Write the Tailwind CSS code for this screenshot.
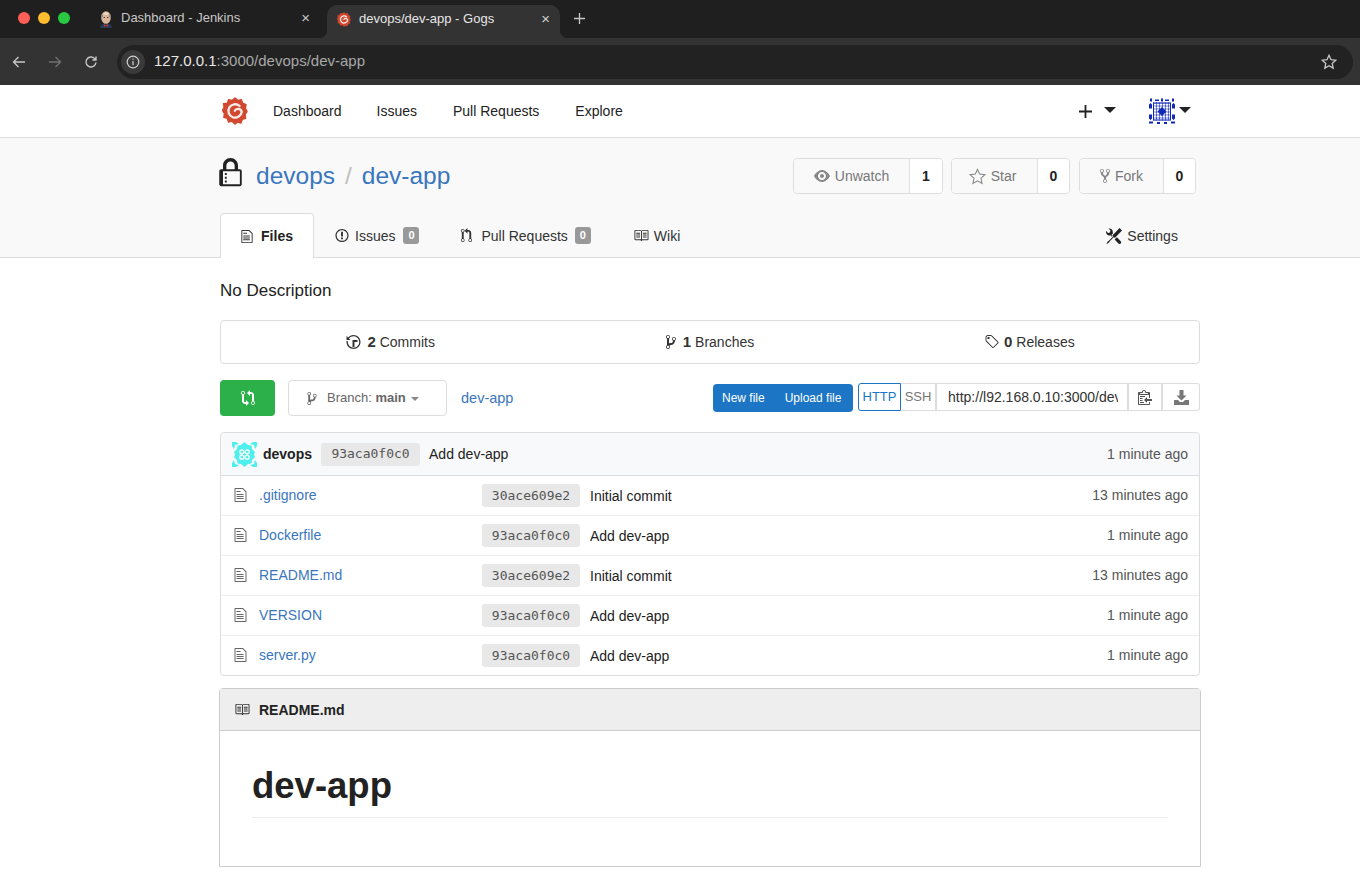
<!DOCTYPE html>
<html lang="en">
<head>
    <meta charset="UTF-8">
    <title>devops/dev-app - Gogs</title>
    <script src="https://cdn.jsdelivr.net/npm/@tailwindcss/browser@4"></script>
</head>
<body class="w-[1360px] h-[878px] overflow-hidden bg-white text-[#212121] font-['Liberation_Sans',Arial,sans-serif]">
    <svg class="absolute w-0 h-0">
        <defs>
            <pattern id="p-lattice" width="3" height="3" patternUnits="userSpaceOnUse"><path d="M1.500 .2l1.300 1.300-1.300 1.300-1.300-1.300z" fill="#1228b8"/></pattern>
        </defs>
        <symbol id="i-file" viewBox="0 0 12 16"><path d="M6 5H2V4h4v1zM2 8h7V7H2v1zm0 2h7V9H2v1zm0 2h7v-1H2v1zm10-7.5V14c0 .55-.45 1-1 1H1c-.55 0-1-.45-1-1V2c0-.55.45-1 1-1h7.5L12 4.5zM11 5L8 2H1v12h10V5z"/></symbol>
        <symbol id="i-book" viewBox="0 0 16 16"><path d="M3 5h4v1H3V5zm0 3h4V7H3v1zm0 2h4V9H3v1zm11-5h-4v1h4V5zm0 2h-4v1h4V7zm0 2h-4v1h4V9zm2-6v9c0 .55-.45 1-1 1H9.5l-1 1-1-1H2c-.55 0-1-.45-1-1V3c0-.55.45-1 1-1h5.5l1 1 1-1H15c.55 0 1 .45 1 1zm-8 .5L7.5 3H2v9h6V3.5zm7-.5H9.5l-.5.5V12h6V3z"/></symbol>
        <symbol id="i-branch" viewBox="0 0 10 16"><path d="M10 5c0-1.11-.89-2-2-2a1.993 1.993 0 00-1 3.72v.3c-.02.52-.23.98-.63 1.38-.4.4-.86.61-1.38.63-.83.02-1.48.16-2 .45V4.72a1.993 1.993 0 00-1-3.72C.88 1 0 1.89 0 3a2 2 0 001 1.72v6.56c-.59.35-1 .99-1 1.72 0 1.11.89 2 2 2 1.11 0 2-.89 2-2 0-.53-.2-1-.53-1.36.09-.06.48-.41.59-.47.25-.11.56-.17.94-.17 1.05-.05 1.95-.45 2.75-1.25S8.95 7.77 9 6.73h-.02C9.59 6.37 10 5.73 10 5zM2 1.8c.66 0 1.2.55 1.2 1.2 0 .65-.55 1.2-1.2 1.2C1.35 4.2.8 3.65.8 3c0-.65.55-1.2 1.2-1.2zm0 12.41c-.66 0-1.2-.55-1.2-1.2 0-.65.55-1.2 1.2-1.2.65 0 1.2.55 1.2 1.2 0 .65-.55 1.2-1.2 1.2zm6-8c-.66 0-1.2-.55-1.2-1.2 0-.65.55-1.2 1.2-1.2.65 0 1.2.55 1.2 1.2 0 .65-.55 1.2-1.2 1.2z"/></symbol>
        <symbol id="i-gogs" viewBox="0 0 26 28">
            <path fill="#d2492f" stroke="#d2492f" stroke-width="1.500" stroke-linejoin="round" d="M13 1l3 2.600 3.400-.9 1.200 3.500 3.400 1.500-.7 3.600 1.700 3.200-2 3 .6 3.700-3.400 1.200-1.300 3.500-3.500-.8L13 27l-2.900-2.900-3.500.8-1.300-3.500-3.400-1.200.6-3.700-2-3 1.700-3.200-.7-3.600L5.400 6.200 6.600 2.700l3.400.9z"/>
            <path fill="none" stroke="#fbeee9" stroke-width="2.300" stroke-linecap="round" d="M17.600 9A6.700 6.700 0 1 0 19.700 15c-.3-2-1.800-3.200-3.700-3.200-1.400 0-2.600.7-3.200 1.900"/>
        </symbol>
    </svg>

    <!-- browser tabs -->
    <div class="h-[38px] bg-[#1f1f1f] flex items-end relative">
        <div class="flex gap-[8px] ml-[18px] mb-[14px]">
            <span class="w-3 h-3 rounded-full bg-[#ff5f57]"></span>
            <span class="w-3 h-3 rounded-full bg-[#febc2e]"></span>
            <span class="w-3 h-3 rounded-full bg-[#28c840]"></span>
        </div>
        <div class="w-[242px] h-[33px] ml-[15px] flex items-center pl-[13px] text-[13px] text-[#c7c7c7]">
            <svg class="w-[16px] h-[18px] mr-[7px] mt-[-6px]" viewBox="0 0 16 18">
                <path fill="#2b3a55" d="M2 18c0-3 2-4.500 6-4.500s6 1.500 6 4.500z"/>
                <ellipse cx="8" cy="7.500" rx="4.800" ry="6.300" fill="#d9b79a"/>
                <path fill="#8c7f78" d="M3.200 8c-.4-2 .2-3.500 1-4.500l.8 3zM12.800 8c.4-2-.2-3.500-1-4.500l-.8 3z"/>
                <path fill="#f0dccb" d="M5 4c.8-2 5-2 6 0-1.500 1-4.500 1-6 0z"/>
                <path fill="#5a3a30" d="M5.500 7h1.500v1H5.500zM9 7h1.500v1H9z"/>
                <path fill="#d33833" d="M6 14.500l2 1 2-1v2l-2-.5-2 .5z"/>
            </svg>
            <span class="mt-[-7px]">Dashboard - Jenkins</span>
            <span class="ml-auto mr-[17px] mt-[-6px] text-[#c7c7c7] text-[15px] font-light">×</span>
        </div>
        <div class="relative w-[233px] h-[33px] bg-[#333333] rounded-t-[10px] flex items-center pl-[10px] text-[13px] text-[#e6e6e6]">
            <span class="absolute bottom-0 left-[-8px] w-[8px] h-[8px] bg-[radial-gradient(circle_at_0_0,transparent_8px,#333333_8.5px)]"></span>
            <span class="absolute bottom-0 right-[-8px] w-[8px] h-[8px] bg-[radial-gradient(circle_at_100%_0,transparent_8px,#333333_8.5px)]"></span>
            <svg class="w-[14px] h-[15px] mr-[8px] mt-[-4px]"><use href="#i-gogs"/></svg>
            <span class="mt-[-5px]">devops/dev-app - Gogs</span>
            <span class="ml-auto mr-[10px] mt-[-4px] text-[#d0d0d0] text-[15px] font-light">×</span>
        </div>
        <svg class="w-[11px] h-[11px] ml-[14px] mb-[14px]" viewBox="0 0 11 11"><path d="M5.500 0v11M0 5.500h11" stroke="#c7c7c7" stroke-width="1.300"/></svg>
    </div>

    <!-- browser toolbar -->
    <div class="h-[47px] bg-[#333333] flex items-center">
        <svg class="w-[14px] h-[14px] ml-[12px]" viewBox="0 0 14 14" fill="none" stroke="#c7c7c7" stroke-width="1.400"><path d="M13 7H1.500M6.500 2l-5 5 5 5"/></svg>
        <svg class="w-[14px] h-[14px] ml-[22px]" viewBox="0 0 14 14" fill="none" stroke="#6f6f6f" stroke-width="1.400"><path d="M1 7h11.500M7.500 2l5 5-5 5"/></svg>
        <svg class="w-[14px] h-[14px] ml-[22px]" viewBox="0 0 14 14" fill="none" stroke="#c7c7c7" stroke-width="1.400"><path d="M12 7.500A5 5 0 1 1 10.500 3.400L12 5M12 1.500V5H8.500"/></svg>
        <div class="w-[1236px] h-[34px] ml-[19px] bg-[#222222] rounded-full flex items-center pl-[4px] pr-[16px]">
            <div class="w-[24px] h-[24px] rounded-full bg-[#3a3a3a] flex items-center justify-center">
                <svg class="w-[14px] h-[14px]" viewBox="0 0 14 14" fill="none" stroke="#d0d0d0" stroke-width="1.200"><circle cx="7" cy="7" r="5.800"/><path d="M7 6v4.200M7 3.500v1.300"/></svg>
            </div>
            <span class="ml-[9px] text-[15px] text-[#e8e8e8]">127.0.0.1<span class="text-[#a8a8a8]">:3000/devops/dev-app</span></span>
            <svg class="w-[16px] h-[16px] ml-auto" viewBox="0 0 16 16" fill="none" stroke="#c7c7c7" stroke-width="1.300"><path d="M8 1.300l2 4.400 4.700.5-3.500 3.200 1 4.700L8 11.700l-4.200 2.400 1-4.700L1.300 6.200 6 5.700z"/></svg>
        </div>
    </div>

    <!-- gogs navbar -->
    <div class="h-[53px] border-b border-[#dddddd] flex items-center pl-[222px] text-sm text-[#222222]">
        <svg class="w-[26px] h-[28px] mr-[25px]"><use href="#i-gogs"/></svg>
        <a class="mr-[35px]">Dashboard</a>
        <a class="mr-[36px]">Issues</a>
        <a class="mr-[36px]">Pull Requests</a>
        <a>Explore</a>
        <svg class="w-[13px] h-[13px] ml-[456px]" viewBox="0 0 13 13"><path d="M6.500 0v13M0 6.500h13" stroke="#222" stroke-width="1.800"/></svg>
        <span class="ml-[12px] border-x-[6px] border-t-[6px] border-x-transparent border-t-[#222222] mt-[-2px]"></span>
        <svg class="w-[26px] h-[27px] ml-[33px]" viewBox="0 0 26 26" fill="#1228b8">
            <path d="M1 0h2v3H1zM6 1h4v1.500H6zM12 0h2v3h-2zM16 1h4v1.500h-4zM23 0h2v3h-2z"/>
            <path d="M0 6l1.500-1.500L3 6v4H0zM23 6l1.500-1.500L26 6v4h-3zM0 16h3v4l-1.500 1.500L0 20zM23 16h3v4l-1.500 1.500L23 20z"/>
            <path d="M0 23h4v2H0zM8 23.500h3v2H8zM15 23.500h3v2h-3zM22 23h4v2h-4z"/>
            <rect x="4" y="4" width="18" height="18" fill="url(#p-lattice)"/>
            <path d="M4 4h18v1H4zM4 21h18v1H4zM4 4h1v18H4zM21 4h1v18h-1z"/>
            <path d="M13 8.500l4.500 4.500-4.500 4.500L8.500 13z"/>
        </svg>
        <span class="ml-[4px] border-x-[6px] border-t-[6px] border-x-transparent border-t-[#222222] mt-[-2px]"></span>
    </div>

    <!-- repo header -->
    <div class="h-[120px] bg-[#f9f9f9] border-b border-[#dddddd] pl-[219px] flex flex-col">
        <div class="h-[75px] flex items-start shrink-0">
            <svg class="w-[23px] h-[30px] mt-[20px]" viewBox="0 0 12 16" fill="#222"><path d="M4 13H3v-1h1v1zm8-6v7c0 .55-.45 1-1 1H1c-.55 0-1-.45-1-1V7c0-.55.45-1 1-1h1V4c0-2.200 1.800-4 4-4s4 1.800 4 4v2h1c.55 0 1 .45 1 1zM3.800 6h4.410V4c0-1.220-.98-2.200-2.200-2.200-1.220 0-2.200.98-2.200 2.200v2H3.800zM11 7H2v7h9V7zM4 8H3v1h1V8zm0 2H3v1h1v-1z"/></svg>
            <div class="ml-[14px] mt-[24px] text-[24.5px] leading-[28px] text-[#3a76bd]">
                <a>devops</a><span class="text-[#c0c0c0] mx-[10px]">/</span><a>dev-app</a>
            </div>
            <div class="ml-auto mr-[164px] mt-[20px] flex text-sm text-[#777777]">
                <div class="h-[36px] w-[150px] flex border border-[#dedede] rounded-[4px] overflow-hidden mr-[8px]">
                    <div class="w-[116px] bg-[#f9f9f9] border-r border-[#dedede] flex items-center justify-center gap-[5px]">
                        <svg class="w-[16px] h-[16px]" viewBox="0 0 16 16" fill="#888"><path d="M8.060 2C3 2 0 8 0 8s3 6 8.060 6C13 14 16 8 16 8s-3-6-7.940-6zM8 12c-2.200 0-4-1.780-4-4 0-2.200 1.800-4 4-4 2.220 0 4 1.800 4 4 0 2.220-1.780 4-4 4zm2-4c0 1.110-.89 2-2 2-1.110 0-2-.89-2-2 0-1.110.89-2 2-2 1.110 0 2 .89 2 2z"/></svg>
                        Unwatch
                    </div>
                    <div class="flex-1 bg-white flex items-center justify-center font-bold text-[#222222]">1</div>
                </div>
                <div class="h-[36px] w-[119px] flex border border-[#dedede] rounded-[4px] overflow-hidden mr-[9px]">
                    <div class="w-[86px] pr-[4px] bg-[#f9f9f9] border-r border-[#dedede] flex items-center justify-center gap-[5px]">
                        <svg class="w-[17px] h-[17px]" viewBox="0 0 16 16" fill="none" stroke="#888" stroke-width="1"><path d="M8 1.300l2 4.400 5 .6-3.700 3.300 1 4.900L8 12.100l-4.300 2.400 1-4.900L1 6.300l5-.6z"/></svg>
                        Star
                    </div>
                    <div class="flex-1 bg-white flex items-center justify-center font-bold text-[#222222]">0</div>
                </div>
                <div class="h-[36px] w-[117px] flex border border-[#dedede] rounded-[4px] overflow-hidden">
                    <div class="w-[84px] bg-[#f9f9f9] border-r border-[#dedede] flex items-center justify-center gap-[5px]">
                        <svg class="w-[10px] h-[16px]" viewBox="0 0 10 16" fill="#888"><path d="M8 1a1.993 1.993 0 00-1 3.720V6L5 8 3 6V4.720A1.993 1.993 0 002 1a1.993 1.993 0 00-1 3.720V6.500l3 3v1.780A1.993 1.993 0 005 15a1.993 1.993 0 001-3.720V9.500l3-3V4.720A1.993 1.993 0 008 1zM2 4.200C1.340 4.200.8 3.650.8 3c0-.65.55-1.200 1.200-1.200.65 0 1.200.55 1.200 1.200 0 .65-.55 1.200-1.200 1.200zm3 10c-.66 0-1.200-.55-1.200-1.200 0-.65.55-1.200 1.200-1.200.65 0 1.200.55 1.200 1.200 0 .65-.55 1.200-1.200 1.200zm3-10c-.66 0-1.200-.55-1.200-1.200 0-.65.55-1.200 1.200-1.200.65 0 1.200.55 1.200 1.200 0 .65-.55 1.200-1.200 1.200z"/></svg>
                        Fork
                    </div>
                    <div class="flex-1 bg-white flex items-center justify-center font-bold text-[#222222]">0</div>
                </div>
            </div>
        </div>
        <div class="h-[45px] shrink-0 flex text-sm text-[#333333] ml-[1px]">
            <div class="w-[94px] h-[45px] bg-white border border-b-0 border-[#dddddd] rounded-t-[4px] flex items-center justify-center font-bold gap-[8px] text-[#222222]">
                <svg class="w-[12px] h-[15px] fill-[#333333]"><use href="#i-file"/></svg>Files
            </div>
            <div class="flex items-center ml-[21px]">
                <svg class="w-[14px] h-[15px] mr-[6px]" viewBox="0 0 14 16" fill="#333"><path d="M7 2.300c3.140 0 5.700 2.560 5.700 5.700s-2.560 5.700-5.700 5.700A5.710 5.710 0 011.300 8c0-3.140 2.560-5.700 5.700-5.700zM7 1C3.140 1 0 4.140 0 8s3.140 7 7 7 7-3.140 7-7-3.140-7-7-7zm1 3H6v5h2V4zm0 6H6v2h2v-2z"/></svg>
                Issues
                <span class="ml-[8px] w-[16px] h-[17px] rounded-[3px] bg-[#999999] text-white text-[11px] font-bold flex items-center justify-center">0</span>
            </div>
            <div class="flex items-center ml-[41px]">
                <svg class="w-[13px] h-[15px] mr-[8px]" viewBox="0 0 12 16" fill="#333"><path d="M11 11.280V5c-.03-.78-.34-1.470-.94-2.060C9.460 2.350 8.780 2.030 8 2H7V0L4 3l3 3V4h1c.27.02.48.11.69.31.21.2.3.42.31.69v6.280A1.993 1.993 0 0010 15a1.993 1.993 0 001-3.720zm-1 2.920c-.66 0-1.200-.55-1.200-1.200 0-.65.55-1.200 1.200-1.200.65 0 1.200.55 1.200 1.200 0 .65-.55 1.200-1.200 1.200zM4 3c0-1.110-.89-2-2-2a1.993 1.993 0 00-1 3.720v6.560A1.993 1.993 0 002 15a1.993 1.993 0 001-3.720V4.720c.59-.34 1-.98 1-1.720zm-.8 10c0 .66-.55 1.200-1.200 1.200-.65 0-1.200-.55-1.200-1.200 0-.65.55-1.200 1.200-1.200.65 0 1.200.55 1.200 1.200zM2 4.200C1.340 4.200.8 3.650.8 3c0-.65.55-1.200 1.200-1.200.65 0 1.200.55 1.200 1.200 0 .65-.55 1.200-1.200 1.200z"/></svg>
                Pull Requests
                <span class="ml-[7px] w-[16px] h-[17px] rounded-[3px] bg-[#999999] text-white text-[11px] font-bold flex items-center justify-center">0</span>
            </div>
            <div class="flex items-center ml-[42px]">
                <svg class="w-[16px] h-[15px] mr-[5px] fill-[#333333]"><use href="#i-book"/></svg>Wiki
            </div>
            <div class="flex items-center ml-[426px]">
                <svg class="w-[16px] h-[16px] mr-[5px]" viewBox="0 0 16 16" fill="#222"><path d="M4.480 7.270c.26.26 1.280 1.330 1.280 1.330l.56-.58-.88-.91 1.690-1.800s-.76-.74-.43-.45c.32-1.190.03-2.510-.87-3.440C4.930.5 3.660.2 2.520.51l1.930 2-.51 1.960-1.890.52-1.930-2C-.19 4.170.1 5.480 1 6.400c.94.98 2.290 1.260 3.480.87zm6.440 1.940l-2.330 2.300 3.840 3.980c.31.33.73.49 1.140.49.41 0 .82-.16 1.140-.49.63-.65.63-1.700 0-2.350l-3.790-3.930zM16 2.530L13.550 0 6.330 7.460l.88.91-4.310 4.460-.99.53-1.390 2.270.35.37 2.200-1.440.51-1.020L7.900 9.080l.88.91L16 2.530z"/></svg>
                Settings
            </div>
        </div>
    </div>

    <!-- page body -->
    <div class="ml-[220px] w-[980px]">
        <p class="h-[62px] pt-[23px] text-[17px] leading-[20px] text-[#222222]">No Description</p>

        <div class="h-[44px] border border-[#dddddd] rounded-[4px] px-[10px] grid grid-cols-3 text-sm text-[#333333]">
            <div class="flex items-center justify-center">
                <svg class="w-[15px] h-[16px] mr-[6px]" viewBox="0 0 14 16" fill="#333"><path d="M8 13H6V6h5v2H8v5zM7 1C4.810 1 2.870 2.020 1.590 3.590L0 2v4h4L2.500 4.500C3.550 3.170 5.170 2.300 7 2.300c3.140 0 5.700 2.560 5.700 5.700s-2.560 5.700-5.700 5.700A5.710 5.710 0 011.300 8c0-.34.03-.67.09-1H.08C.03 7.330 0 7.660 0 8c0 3.860 3.140 7 7 7s7-3.140 7-7-3.140-7-7-7z"/></svg>
                <b class="mr-[4px] text-[15px]">2</b> Commits
            </div>
            <div class="flex items-center justify-center">
                <svg class="w-[10px] h-[16px] mr-[7px] fill-[#333333]"><use href="#i-branch"/></svg>
                <b class="mr-[4px] text-[15px]">1</b> Branches
            </div>
            <div class="flex items-center justify-center">
                <svg class="w-[15px] h-[16px] mr-[5px]" viewBox="0 0 14 16" fill="#333"><path d="M7.730 1.730C7.260 1.260 6.620 1 5.960 1H3.500C2.130 1 1 2.130 1 3.500v2.470c0 .66.27 1.300.73 1.770l6.060 6.060c.39.39 1.020.39 1.410 0l4.590-4.590a.996.996 0 000-1.410L7.730 1.730zM2.380 7.090c-.31-.3-.47-.7-.47-1.130V3.500c0-.88.72-1.590 1.590-1.590h2.470c.42 0 .83.16 1.130.47l6.140 6.130-4.730 4.730-6.130-6.150zM3.010 3h2v2H3V3h.01z"/></svg>
                <b class="mr-[4px] text-[15px]">0</b> Releases
            </div>
        </div>

        <!-- branch and clone row -->
        <div class="h-[36px] mt-[16px] flex items-center text-sm">
            <div class="w-[55px] h-[36px] rounded-[4px] bg-[#2cb14a] flex items-center justify-center">
                <svg class="w-[14px] h-[16px]" viewBox="0 0 14 16" fill="#fff"><path d="M5 12H4c-.27-.02-.48-.11-.69-.31-.21-.2-.3-.42-.31-.69V4.720A1.993 1.993 0 002 1a1.993 1.993 0 00-1 3.720V11c.03.78.34 1.470.94 2.060.6.59 1.280.91 2.060.94h1v2l3-3-3-3v2zM2 1.800c.66 0 1.200.55 1.200 1.200 0 .65-.55 1.200-1.200 1.200C1.350 4.200.8 3.650.8 3c0-.65.55-1.200 1.200-1.200zm11 9.480V5c-.03-.78-.34-1.470-.94-2.060-.6-.59-1.280-.91-2.060-.94H9V0L6 3l3 3V4h1c.27.02.48.11.69.31.21.2.3.42.31.69v6.280A1.993 1.993 0 0012 15a1.993 1.993 0 001-3.720zm-1 2.920c-.66 0-1.200-.55-1.200-1.200 0-.65.55-1.200 1.200-1.200.65 0 1.200.55 1.200 1.200 0 .65-.55 1.200-1.200 1.200z"/></svg>
            </div>
            <div class="w-[159px] h-[36px] ml-[13px] border border-[#dddddd] rounded-[4px] pt-[1px] flex items-center pl-[18px] text-[13px] text-[#666666]">
                <svg class="w-[10px] h-[15px] mr-[10px] fill-[#666666]"><use href="#i-branch"/></svg>
                Branch:&nbsp;<b>main</b>
                <span class="ml-[5px] border-x-[4px] border-t-[4px] border-x-transparent border-t-[#888888]"></span>
            </div>
            <a class="ml-[14px] w-[52px] shrink-0 whitespace-nowrap text-[14.5px] text-[#3a76bd]">dev-app</a>
            <div class="ml-[200px] w-[140px] h-[28px] rounded-[4px] bg-[#1c76c5] flex items-center text-white text-xs">
                <span class="ml-[9px]">New file</span><span class="ml-[20px]">Upload file</span>
            </div>
            <div class="ml-[5px] w-[43px] h-[28px] mt-[-2px] border border-[#1c76c5] rounded-l-[3px] text-[#1c76c5] text-[13px] flex items-center justify-center">HTTP</div>
            <div class="w-[36px] h-[28px] mt-[-2px] border-y border-r-2 border-[#dddddd] text-[#777777] text-[13px] flex items-center justify-center">SSH</div>
            <div class="w-[190px] h-[28px] mt-[-2px] border-y border-[#dddddd] pl-[11px] pr-[9px] text-sm leading-[26px] text-[#333333]"><div class="overflow-hidden whitespace-nowrap">http://l92.168.0.10:3000/devops/dev-app.git</div></div>
            <div class="w-[36px] h-[28px] mt-[-2px] border-y border-x-2 border-[#dddddd] flex items-center justify-center">
                <svg class="w-[14px] h-[16px]" viewBox="0 0 14 16" fill="#555"><path d="M2 13h4v1H2v-1zm5-6H2v1h5V7zm2 3V8l-3 3 3 3v-2h5v-2H9zM4.500 9H2v1h2.500V9zM2 12h2.500v-1H2v1zm9 1h1v2c-.02.28-.11.52-.3.7-.19.18-.42.28-.7.3H1c-.55 0-1-.45-1-1V4c0-.55.45-1 1-1h3c0-1.110.89-2 2-2 1.110 0 2 .89 2 2h3c.55 0 1 .45 1 1v5h-1V6H1v9h10v-2zM2 5h8c0-.55-.45-1-1-1H8c-.55 0-1-.45-1-1s-.45-1-1-1-1 .45-1 1-.45 1-1 1H3c-.55 0-1 .45-1 1z"/></svg>
            </div>
            <div class="w-[37px] h-[28px] mt-[-2px] border-y border-r border-[#dddddd] rounded-r-[3px] flex items-center justify-center">
                <svg class="w-[15px] h-[15px]" viewBox="0 0 15 15" fill="#777"><path d="M5.500 0h4v5.500h3L7.500 10.500l-5-5h3zM0 10h4l2 2h3l2-2h4v5H0z"/></svg>
            </div>
        </div>

        <!-- file table -->
        <div class="mt-[16px] border border-[#dddddd] rounded-[4px] text-sm">
            <div class="h-[43px] bg-[#f8f9fa] border-b border-[#dddddd] rounded-t-[4px] flex items-center pl-[11px] pr-[11px]">
                <svg class="w-[25px] h-[25px] mr-[6px]" viewBox="0 0 25 25" fill="#4df0ec">
                    <path d="M0 0h4L7 2 3 3 2 7 0 4zM25 0h-4l-3 2 4 1 1 4 2-3zM0 25h4l3-2-4-1-1-4-2 3zM25 25h-4l-3-2 4-1 1-4 2 3z"/>
                    <path d="M12.500 0l3.500 3 3.500.5.5 3.500 3 3-1 2.500 1 2.500-3 3-.5 3.500-3.500.5-3.500 3-3.500-3-3.500-.5-.5-3.500-3-3 1-2.500-1-2.500 3-3 .5-3.500 3.500-.5z"/>
                    <g fill="none" stroke="#fff" stroke-width="1.300"><circle cx="9.800" cy="9.800" r="2"/><circle cx="15.200" cy="9.800" r="2"/><circle cx="9.800" cy="15.200" r="2"/><circle cx="15.200" cy="15.200" r="2"/></g>
                </svg>
                <b class="text-[#222222]">devops</b>
                <span class="ml-[9px] w-[99px] h-[23px] pt-[1px] bg-[#e8e8e8] rounded-[3px] flex items-center justify-center font-['DejaVu_Sans_Mono',monospace] text-[13px] text-[#555555]">93aca0f0c0</span>
                <span class="ml-[9px] text-[#222222]">Add dev-app</span>
                <span class="ml-auto text-[#555555]">1 minute ago</span>
            </div>
            <div class="h-[40px] border-b border-[#eeeeee] flex items-center pl-[13px] pr-[11px]">
                <svg class="w-[13px] h-[16px] mr-[12px] mt-[-2px] fill-[#666666]"><use href="#i-file"/></svg>
                <a class="w-[223px] mt-[-2px] text-[#3a76bd]">.gitignore</a>
                <span class="w-[98px] h-[23px] pt-[1px] bg-[#e8e8e8] rounded-[3px] flex items-center justify-center font-['DejaVu_Sans_Mono',monospace] text-[13px] text-[#555555]">30ace609e2</span>
                <span class="ml-[10px] text-[#222222]">Initial commit</span>
                <span class="ml-auto mt-[-2px] text-[#555555]">13 minutes ago</span>
            </div>
            <div class="h-[40px] border-b border-[#eeeeee] flex items-center pl-[13px] pr-[11px]">
                <svg class="w-[13px] h-[16px] mr-[12px] mt-[-2px] fill-[#666666]"><use href="#i-file"/></svg>
                <a class="w-[223px] mt-[-2px] text-[#3a76bd]">Dockerfile</a>
                <span class="w-[98px] h-[23px] pt-[1px] bg-[#e8e8e8] rounded-[3px] flex items-center justify-center font-['DejaVu_Sans_Mono',monospace] text-[13px] text-[#555555]">93aca0f0c0</span>
                <span class="ml-[10px] text-[#222222]">Add dev-app</span>
                <span class="ml-auto mt-[-2px] text-[#555555]">1 minute ago</span>
            </div>
            <div class="h-[40px] border-b border-[#eeeeee] flex items-center pl-[13px] pr-[11px]">
                <svg class="w-[13px] h-[16px] mr-[12px] mt-[-2px] fill-[#666666]"><use href="#i-file"/></svg>
                <a class="w-[223px] mt-[-2px] text-[#3a76bd]">README.md</a>
                <span class="w-[98px] h-[23px] pt-[1px] bg-[#e8e8e8] rounded-[3px] flex items-center justify-center font-['DejaVu_Sans_Mono',monospace] text-[13px] text-[#555555]">30ace609e2</span>
                <span class="ml-[10px] text-[#222222]">Initial commit</span>
                <span class="ml-auto mt-[-2px] text-[#555555]">13 minutes ago</span>
            </div>
            <div class="h-[40px] border-b border-[#eeeeee] flex items-center pl-[13px] pr-[11px]">
                <svg class="w-[13px] h-[16px] mr-[12px] mt-[-2px] fill-[#666666]"><use href="#i-file"/></svg>
                <a class="w-[223px] mt-[-2px] text-[#3a76bd]">VERSION</a>
                <span class="w-[98px] h-[23px] pt-[1px] bg-[#e8e8e8] rounded-[3px] flex items-center justify-center font-['DejaVu_Sans_Mono',monospace] text-[13px] text-[#555555]">93aca0f0c0</span>
                <span class="ml-[10px] text-[#222222]">Add dev-app</span>
                <span class="ml-auto mt-[-2px] text-[#555555]">1 minute ago</span>
            </div>
            <div class="h-[39px] flex items-center pl-[13px] pr-[11px]">
                <svg class="w-[13px] h-[16px] mr-[12px] mt-[-2px] fill-[#666666]"><use href="#i-file"/></svg>
                <a class="w-[223px] mt-[-2px] text-[#3a76bd]">server.py</a>
                <span class="w-[98px] h-[23px] pt-[1px] bg-[#e8e8e8] rounded-[3px] flex items-center justify-center font-['DejaVu_Sans_Mono',monospace] text-[13px] text-[#555555]">93aca0f0c0</span>
                <span class="ml-[10px] text-[#222222]">Add dev-app</span>
                <span class="ml-auto mt-[-2px] text-[#555555]">1 minute ago</span>
            </div>
        </div>

        <!-- readme -->
        <div class="mt-[12px] ml-[-1px] w-[982px] h-[179px] border border-[#cccccc] rounded-t-[4px]">
            <div class="h-[42px] bg-[#eeeeee] border-b border-[#cccccc] flex items-center pl-[14px] text-sm font-bold text-[#222222]">
                <svg class="w-[16px] h-[15px] mr-[9px] fill-[#333333]"><use href="#i-book"/></svg>README.md
            </div>
            <div class="mx-[32px] mt-[33px] pb-[9px] border-b border-[#eeeeee]">
                <h1 class="text-[36.5px] leading-[44px] font-bold text-[#222222]">dev-app</h1>
            </div>
        </div>
    </div>
</body>
</html>
